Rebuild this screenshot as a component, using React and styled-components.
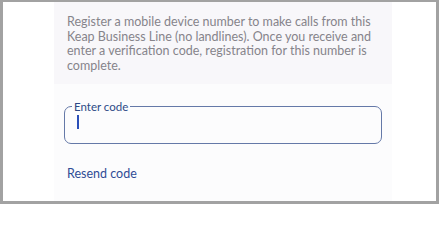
import React from 'react'
import styled, { createGlobalStyle } from 'styled-components'

const GlobalStyle = createGlobalStyle`
  html, body {
    margin: 0;
    padding: 0;
    background: #ffffff;
  }
  * {
    box-sizing: border-box;
  }
`

export default function App() {
  return (
    <>
      <GlobalStyle />
      <Frame>
        <Panel>
          <InfoBox>
            Register a mobile device number to make calls from this Keap Business
            Line (no landlines). Once you receive and enter a verification code,
            registration for this number is complete.
          </InfoBox>
          <Field>
            <Legend>Enter code</Legend>
            <Caret />
          </Field>
          <LinkButton>Resend code</LinkButton>
        </Panel>
      </Frame>
    </>
  )
}

const Frame = styled.div`
  width: 439px;
  height: 204px;
  border: 3px solid #a2a2a2;
  border-top-width: 2px;
  background: #ffffff;
  display: flex;
  padding-left: 51px;
  font-family: Lato, "Open Sans", sans-serif;
`

const Panel = styled.div`
  width: 338px;
  background: #fcfcfd;
  display: flex;
  flex-direction: column;
`

const InfoBox = styled.div`
  height: 82px;
  background: #f8f7fa;
  padding: 13px 12px 0 13px;
  font-size: 12.5px;
  line-height: 14.5px;
  color: #86848b;
`

const Field = styled.fieldset`
  margin: 17px 10px 0 10px;
  height: 43px;
  padding: 0 0 0 12px;
  border: 1.3px solid #6579a8;
  border-radius: 7px;
  display: flex;
  align-items: center;
`

const Legend = styled.legend`
  font-size: 11.5px;
  line-height: 11px;
  color: #2d4a86;
  padding: 0 2px;
  margin-left: -5px;
`

const Caret = styled.span`
  width: 1.5px;
  height: 14px;
  background: #2b4fb8;
  margin-top: 3px;
`

const LinkButton = styled.button`
  align-self: flex-start;
  margin: 22px 0 0 13px;
  padding: 0;
  border: none;
  background: none;
  font-family: inherit;
  font-size: 12.5px;
  color: #2f4c96;
  cursor: pointer;
`
